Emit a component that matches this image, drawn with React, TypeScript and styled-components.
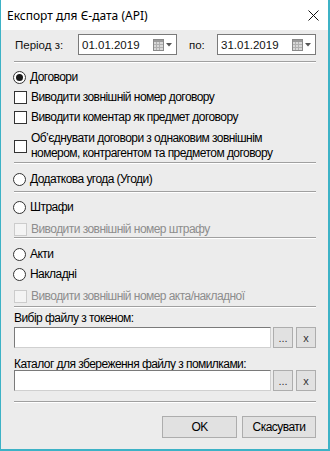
import React from "react";
import styled, { createGlobalStyle } from "styled-components";

const Global = createGlobalStyle`
  html, body { margin: 0; padding: 0; background: #ffffff; }
  #root { width: 330px; height: 451px; }
`;

const BODY_FONT = `"Liberation Sans", Arial, sans-serif`;

const Window = styled.div`
  box-sizing: border-box;
  width: 330px;
  height: 451px;
  border-style: solid;
  border-color: #3db2c6;
  border-width: 0 2px 2px 1px;
  background: #ececec;
  display: flex;
  flex-direction: column;
  overflow: hidden;
`;

const TitleBar = styled.div`
  height: 30px;
  flex: none;
  background: #ffffff;
  display: flex;
  align-items: center;
  justify-content: space-between;
  padding: 0 9px 0 6px;
  font-family: "Noto Sans", "Open Sans", sans-serif;
  font-size: 12px;
  color: #000;
`;

const Body = styled.div`
  display: flex;
  flex-direction: column;
  padding: 0 12px 0 12px;
  font-family: ${BODY_FONT};
  font-size: 12px;
  letter-spacing: -0.55px;
  color: #000;
`;

const PeriodRow = styled.div`
  margin-top: 4px;
  height: 21px;
  display: flex;
  align-items: center;
  padding-left: 2px;
  letter-spacing: 0;
  font-size: 11.5px;
  color: #111;
`;

const PeriodLabel = styled.span<{ $w: number; $pl?: number }>`
  box-sizing: border-box;
  width: ${(p) => p.$w}px;
  padding-left: ${(p) => p.$pl ?? 0}px;
  flex: none;
`;

const DateBox = styled.div`
  box-sizing: border-box;
  width: 99px;
  height: 21px;
  background: #fff;
  border: 1px solid #7a7a7a;
  display: flex;
  align-items: center;
  padding: 0 3px 0 3px;
  font-size: 11.5px;
`;

const DateText = styled.span`
  flex: 1;
`;

const Separator = styled.div<{ $mt: number }>`
  margin-top: ${(p) => p.$mt}px;
  height: 0;
  flex: none;
  border-top: 1px solid #a0a0a0;
  border-bottom: 1px solid #ffffff;
  margin-left: 1px;
`;

const Row = styled.div<{ $mt: number; $disabled?: boolean }>`
  margin-top: ${(p) => p.$mt}px;
  min-height: 16px;
  display: flex;
  align-items: center;
  color: ${(p) => (p.$disabled ? "#8d8d8d" : "#000")};
`;

const RadioCircle = styled.span<{ $checked?: boolean }>`
  box-sizing: border-box;
  width: 13px;
  height: 13px;
  border-radius: 50%;
  border: 1px solid #333;
  background: #fff;
  flex: none;
  margin-right: 4px;
  display: flex;
  align-items: center;
  justify-content: center;
  &::after {
    content: "";
    display: ${(p) => (p.$checked ? "block" : "none")};
    width: 7px;
    height: 7px;
    border-radius: 50%;
    background: #1a1a1a;
  }
`;

const CheckBox = styled.span<{ $disabled?: boolean }>`
  box-sizing: border-box;
  width: 13px;
  height: 13px;
  border: 1px solid ${(p) => (p.$disabled ? "#cccccc" : "#333333")};
  background: ${(p) => (p.$disabled ? "#f4f4f4" : "#fff")};
  flex: none;
  margin-left: 1px;
  margin-right: 4px;
`;

const MultiText = styled.span`
  line-height: 15px;
`;

const FieldLabel = styled.div<{ $mt: number }>`
  margin-top: ${(p) => p.$mt}px;
  height: 12px;
  line-height: 12px;
  padding-left: 1px;
`;

const FileRow = styled.div<{ $mt: number }>`
  margin-top: ${(p) => p.$mt}px;
  height: 21px;
  flex: none;
  display: flex;
  align-items: stretch;
  padding-left: 1px;
`;

const FileInput = styled.div`
  box-sizing: border-box;
  flex: 1;
  background: #fff;
  border: 1px solid #7a7a7a;
  border-right-color: #d0d0d0;
  border-bottom-color: #d0d0d0;
`;

const SmallButton = styled.div<{ $first?: boolean }>`
  box-sizing: border-box;
  width: 20px;
  margin-left: ${(p) => (p.$first ? 2 : 3)}px;
  background: #e1e1e1;
  border: 1px solid #adadad;
  display: flex;
  align-items: center;
  justify-content: center;
  font-size: 11px;
  letter-spacing: 0;
  color: #333;
`;

const Footer = styled.div`
  margin-top: 13px;
  display: flex;
  justify-content: flex-end;
  gap: 5px;
`;

const Button = styled.div<{ $w: number }>`
  box-sizing: border-box;
  width: ${(p) => p.$w}px;
  height: 22px;
  background: #e1e1e1;
  border: 1px solid #adadad;
  display: flex;
  align-items: center;
  justify-content: center;
`;

const CalendarIcon = () => (
  <svg width="20" height="12" viewBox="0 0 20 12" style={{ flex: "none" }}>
    <rect x="0.5" y="0.5" width="10" height="11" fill="#d8d8d8" stroke="#8a8a8a" />
    <rect x="1" y="1" width="9" height="2" fill="#9a9a9a" />
    <g stroke="#b0b0b0" strokeWidth="1">
      <line x1="1" y1="5.5" x2="10" y2="5.5" />
      <line x1="1" y1="8.5" x2="10" y2="8.5" />
      <line x1="3.5" y1="3" x2="3.5" y2="11" />
      <line x1="6.5" y1="3" x2="6.5" y2="11" />
    </g>
    <path d="M13 4 L19 4 L16 7.5 Z" fill="#555" />
  </svg>
);

const CloseIcon = () => (
  <svg width="11" height="11" viewBox="0 0 11 11">
    <path d="M0.5 0.5 L10.5 10.5 M10.5 0.5 L0.5 10.5" stroke="#111" strokeWidth="1" />
  </svg>
);

export default function App() {
  return (
    <>
      <Global />
      <Window>
        <TitleBar>
          <span>Експорт для Є-дата (API)</span>
          <CloseIcon />
        </TitleBar>
        <Body>
          <PeriodRow>
            <PeriodLabel $w={63}>Період з:</PeriodLabel>
            <DateBox>
              <DateText>01.01.2019</DateText>
              <CalendarIcon />
            </DateBox>
            <PeriodLabel $w={40} $pl={12}>
              по:
            </PeriodLabel>
            <DateBox>
              <DateText>31.01.2019</DateText>
              <CalendarIcon />
            </DateBox>
          </PeriodRow>

          <Separator $mt={6} />

          <Row $mt={6}>
            <RadioCircle $checked />
            Договори
          </Row>
          <Row $mt={4}>
            <CheckBox />
            Виводити зовнішній номер договору
          </Row>
          <Row $mt={4}>
            <CheckBox />
            Виводити коментар як предмет договору
          </Row>
          <Row $mt={6}>
            <CheckBox />
            <MultiText>
              Об’єднувати договори з однаковим зовнішнім
              <br />
              номером, контрагентом та предметом договору
            </MultiText>
          </Row>

          <Separator $mt={1} />

          <Row $mt={7}>
            <RadioCircle />
            Додаткова угода (Угоди)
          </Row>

          <Separator $mt={4} />

          <Row $mt={6}>
            <RadioCircle />
            Штрафи
          </Row>
          <Row $mt={6} $disabled>
            <CheckBox $disabled />
            Виводити зовнішній номер штрафу
          </Row>

          <Separator $mt={0} />

          <Row $mt={7}>
            <RadioCircle />
            Акти
          </Row>
          <Row $mt={4}>
            <RadioCircle />
            Накладні
          </Row>
          <Row $mt={6} $disabled>
            <CheckBox $disabled />
            Виводити зовнішній номер акта/накладної
          </Row>

          <Separator $mt={2} />

          <FieldLabel $mt={4}>Вибір файлу з токеном:</FieldLabel>
          <FileRow $mt={3}>
            <FileInput />
            <SmallButton $first>...</SmallButton>
            <SmallButton>x</SmallButton>
          </FileRow>

          <FieldLabel $mt={10}>Каталог для збереження файлу з помилками:</FieldLabel>
          <FileRow $mt={0}>
            <FileInput />
            <SmallButton $first>...</SmallButton>
            <SmallButton>x</SmallButton>
          </FileRow>

          <Separator $mt={10} />

          <Footer>
            <Button $w={75}>OK</Button>
            <Button $w={74}>Скасувати</Button>
          </Footer>
        </Body>
      </Window>
    </>
  );
}
